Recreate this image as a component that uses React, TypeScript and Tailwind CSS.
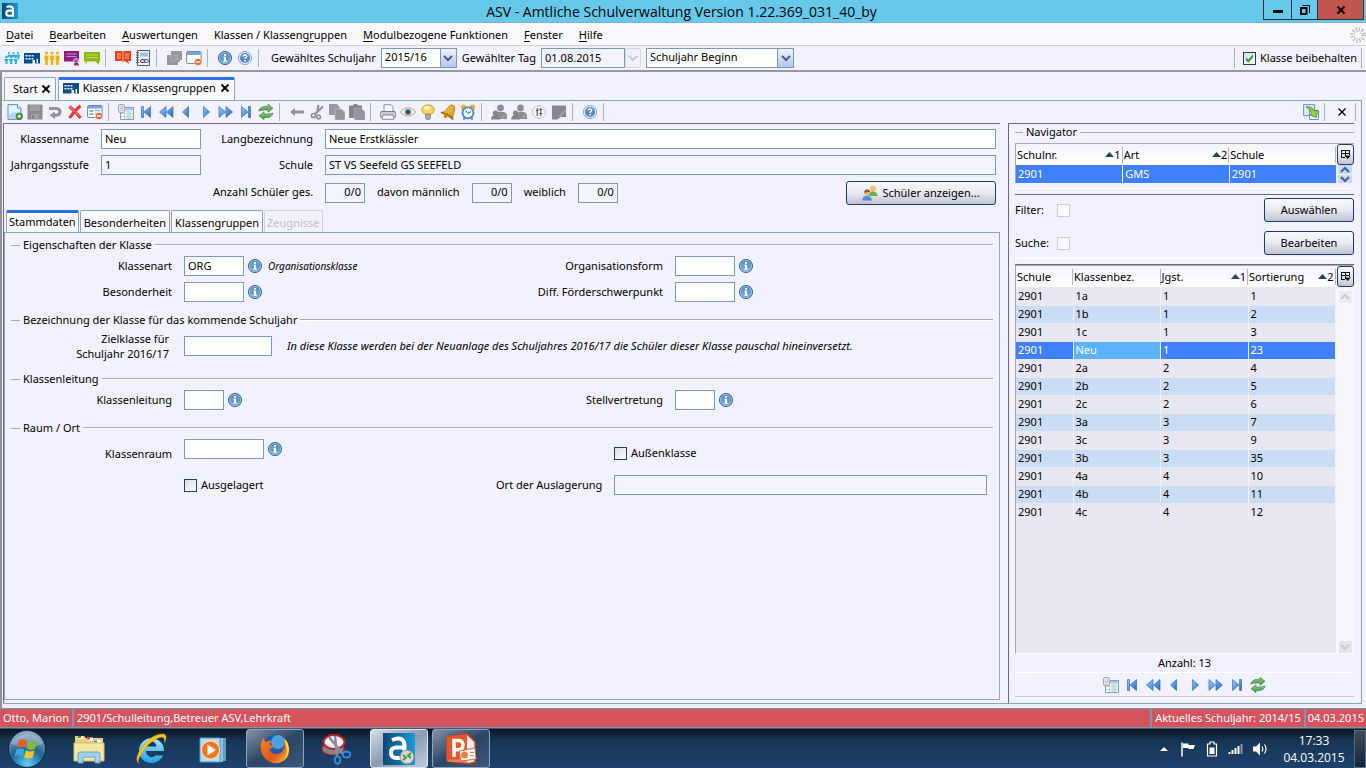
import type { ReactNode } from 'react';

/* ---------- icons ---------- */

type IconProps = { children: ReactNode; size?: string };

function Svg({ children, size = 'size-4' }: IconProps) {
  return (
    <svg viewBox="0 0 16 16" className={`${size} block shrink-0`} aria-hidden="true">
      {children}
    </svg>
  );
}

function Gradients() {
  return (
    <svg className="absolute size-0" aria-hidden="true">
      <defs>
        <linearGradient id="blueArrow" x1="0" y1="0" x2="1" y2="1">
          <stop offset="0" stopColor="#a5cdf5" />
          <stop offset="1" stopColor="#1f62c4" />
        </linearGradient>
        <linearGradient id="infoFill" x1="0" y1="0" x2="0" y2="1">
          <stop offset="0" stopColor="#4f86bd" />
          <stop offset="1" stopColor="#7fb0da" />
        </linearGradient>
        <linearGradient id="gold" x1="0" y1="0" x2="1" y2="1">
          <stop offset="0" stopColor="#ffe36a" />
          <stop offset="1" stopColor="#c98208" />
        </linearGradient>
        <linearGradient id="green" x1="0" y1="0" x2="0" y2="1">
          <stop offset="0" stopColor="#8fd18a" />
          <stop offset="1" stopColor="#3f9440" />
        </linearGradient>
        <radialGradient id="orb" cx="0.5" cy="0.9" r="0.9">
          <stop offset="0" stopColor="#5fd0f5" />
          <stop offset="0.5" stopColor="#1f6292" />
          <stop offset="1" stopColor="#9db4c4" />
        </radialGradient>
        <linearGradient id="asv" x1="0" y1="0" x2="1" y2="0">
          <stop offset="0" stopColor="#0c4576" />
          <stop offset="1" stopColor="#1c9ad6" />
        </linearGradient>
        <linearGradient id="fox" x1="0" y1="0" x2="1" y2="1">
          <stop offset="0" stopColor="#f08a1c" />
          <stop offset="0.6" stopColor="#e2551a" />
          <stop offset="1" stopColor="#fdd33a" />
        </linearGradient>
        <linearGradient id="ie" x1="0" y1="0" x2="0" y2="1">
          <stop offset="0" stopColor="#a5e6fb" />
          <stop offset="1" stopColor="#1f9fe0" />
        </linearGradient>
      </defs>
    </svg>
  );
}

const AsvLogo = () => (
  <Svg>
    <rect width="16" height="16" fill="url(#asv)" />
    <path d="M4.600 4.200Q7.500 2.600 10 4Q11 4.800 11 6.500V12.800H6.800Q4.200 12.600 4.200 10.200Q4.300 7.700 7 7.600H10.600" fill="none" stroke="#fff" strokeWidth="2.100" />
  </Svg>
);

const People = () => (
  <Svg>
    <g fill="#25b1dc">
      <circle cx="5" cy="3" r="1.100" /><circle cx="9.500" cy="3" r="1.100" /><circle cx="14" cy="3" r="1.100" />
      <path d="M3.500 4.800h12.500v1L14.800 9h-1L13 6.500l-1.500 1L10 6.500 8.500 7.500 7 6.500 4 7z" />
      <circle cx="2.500" cy="7" r="1.300" /><circle cx="7" cy="7" r="1.300" /><circle cx="11.500" cy="7" r="1.300" />
      <path d="M0 9h4.500l-1 2.500V14h-2v-2.500zM4.700 9h4.500l-1 2.500V14h-2v-2.500zM9.400 9h4.500l-1 2.500V14h-2v-2.500z" />
    </g>
  </Svg>
);

const School = () => (
  <Svg>
    <path d="M0 3h16v10.500h-5V10H8.500v3.500H0z" fill="#0a4c8c" />
    <path d="M1.500 5h2v1.500h-2zM4.500 5h2v1.500h-2zM7.500 5h2v1.500h-2zM1.500 8h2v1.500h-2zM4.500 8h2v1.500h-2zM7.500 8h2v1.500h-2zM12.500 9h1.500v4.500h-1.500z" fill="#f4f7ff" />
  </Svg>
);

const YellowPeople = () => (
  <Svg>
    <g fill="#f6b100">
      <circle cx="2.500" cy="3" r="1.600" /><circle cx="8" cy="3" r="1.600" /><circle cx="13.500" cy="3" r="1.600" />
      <path d="M.5 5.500h4V10h-.7v5H1.200v-5H.5zM6 5.500h4V10h-.7v5H6.700v-5H6zM11.500 5.500h4V10h-.7v5h-2.600v-5h-.7z" />
    </g>
  </Svg>
);

const Certificate = () => (
  <Svg>
    <path d="M0 1h15v10.500H0z" fill="#8b1c83" />
    <path d="M2.500 4h10M2.500 6.500h10" stroke="#c98cc6" strokeWidth="1" />
    <circle cx="12" cy="11" r="2.500" fill="#a94ba2" stroke="#f3e4f6" strokeWidth=".8" />
    <path d="M10.500 13l-.5 3 2-1 3 1-1-3" fill="#8b1c83" />
  </Svg>
);

const Speech = () => (
  <Svg>
    <path d="M0 2h16v9.500h-1v3.500l-3.500-3.500H3L2 15l-.5-3.500H0z" fill="#8fb80c" />
    <path d="M2.500 5h11M2.500 7.500h11" stroke="#c6dc7c" />
  </Svg>
);

const OrangeBook = () => (
  <Svg>
    <path d="M0 1h7l1 1 1-1h7v10h-3l1.500 3-5-3L8 12l-1-1H0z" fill="#e5451b" />
    <path d="M2 4h4M2 6h4M2 8h4M10 4h4M10 6h4M10 8h4M8 2v9" stroke="#f9b9a4" strokeWidth=".9" />
  </Svg>
);

const Notebook = () => (
  <Svg>
    <path d="M2.500.5h12v15h-12z" fill="#eef2f8" stroke="#4b5a70" />
    <path d="M5 2.500h8v4H5z" fill="#9cc1ea" />
    <path d="M1 2.500h3M1 5h3M1 7.500h3M1 10h3M1 12.500h3" stroke="#555" strokeWidth=".9" />
    <rect x="5.500" y="9.500" width="4.500" height="3" rx="1.500" fill="none" stroke="#333" />
    <rect x="9" y="9.500" width="4.500" height="3" rx="1.500" fill="none" stroke="#555" />
  </Svg>
);

const GrayPages = () => (
  <Svg>
    <path d="M5 1h11v9h-2v2h-2v3H1V5h4z" fill="#98989c" />
    <path d="M5 5v6q3 1 5-2l1.500 1V5.500L8 6" fill="none" stroke="#adadb3" strokeWidth="1.200" />
  </Svg>
);

const WindowMinus = () => (
  <Svg>
    <rect x=".6" y="1.500" width="14.500" height="12" rx="1" fill="#fff" stroke="#5e8ac4" />
    <path d="M1 2h13.700v3H1z" fill="#75a5dc" />
    <circle cx="12" cy="12" r="3.600" fill="#e2672a" stroke="#fff" strokeWidth=".5" />
    <path d="M10 12h4" stroke="#fff" strokeWidth="1.400" />
  </Svg>
);

const FormMinus = () => (
  <Svg>
    <rect x=".6" y="1.500" width="14.500" height="12" rx="1" fill="#fff" stroke="#5e8ac4" />
    <path d="M1 2h13.700v2.500H1z" fill="#75a5dc" />
    <path d="M2.500 7h4M2.500 10h4" stroke="#555" />
    <path d="M8 6.500h5M8 9.500h3" stroke="#7fb0e6" strokeWidth="1.500" />
    <circle cx="12" cy="12" r="3.600" fill="#e2672a" stroke="#fff" strokeWidth=".5" />
    <path d="M10 12h4" stroke="#fff" strokeWidth="1.400" />
  </Svg>
);

const Info = () => (
  <Svg>
    <circle cx="8" cy="8" r="6.600" fill="url(#infoFill)" stroke="#3a6aa3" strokeWidth="1" />
    <circle cx="8" cy="8" r="5.600" fill="none" stroke="#a3c3e2" strokeWidth=".8" />
    <path d="M7 4h2v1.700H7zM6.300 6.700H9v4h.9v1.100H6.200v-1.100H7V7.800h-.7z" fill="#fff" />
  </Svg>
);

const Help = () => (
  <Svg>
    <circle cx="8" cy="8" r="6.600" fill="#dfeaf7" stroke="#88aad0" />
    <circle cx="8" cy="8" r="5" fill="#5488c8" />
    <path d="M6.200 6.500Q6.300 5 8 5t1.800 1.500Q9.700 7.500 8 8.300v.8" fill="none" stroke="#fff" strokeWidth="1.400" />
    <path d="M7.200 10h1.600v1.400H7.200z" fill="#fff" />
  </Svg>
);

const NewDoc = () => (
  <Svg>
    <path d="M1 .6h9.500L14 4v11.400H1z" fill="#e4f0fc" stroke="#4f8fd0" />
    <path d="M10.500.6V4H14" fill="#fff" stroke="#4f8fd0" />
    <path d="M2 11.500q4-4 10-3v6.500H2z" fill="#b5d6f5" />
    <circle cx="12.300" cy="12.300" r="3.300" fill="#4a9a2c" stroke="#2f7220" strokeWidth=".6" />
    <path d="M10.500 12.300h3.600M12.300 10.500v3.600" stroke="#fff" strokeWidth="1.300" />
  </Svg>
);

const Save = () => (
  <Svg>
    <path d="M.5.500h14l1 1v14H.5z" fill="#8b8b8f" />
    <path d="M3 1h10v6H3z" fill="#9c9ca1" /><path d="M4 10h8v5H4z" fill="#9f9fa4" /><path d="M5 11h2v4H5z" fill="#7d7d82" />
  </Svg>
);

const Undo = () => (
  <Svg>
    <path d="M2 4.500h7.500q3.500.3 3.500 3.300t-3.500 3.400H6" fill="none" stroke="#929298" strokeWidth="3" />
    <path d="M8 7.500v7.500L2.500 11.200z" fill="#929298" />
  </Svg>
);

const Delete = () => (
  <Svg>
    <path d="M2.500 2.500Q8 7 13.500 14M13.500 1.800Q7 7 2.500 14" stroke="#e73a37" strokeWidth="3.200" fill="none" />
    <path d="M3 3q4 3 9 9" stroke="#ff8d84" fill="none" />
  </Svg>
);

const TableView = () => (
  <Svg>
    <path d="M2.500 3.500h13v12h-13z" fill="#f8fbfe" stroke="#7ba0cc" />
    <path d="M3 4h12v2.500H3z" fill="#a5cbef" />
    <path d="M6.500 6v9M3 9.500h12M3 12.500h12" stroke="#b7cde4" strokeWidth=".8" />
    <path d="M8.500 8h5M8.500 11h5M8.500 14h5" stroke="#8cc98a" strokeWidth=".9" />
    <rect x=".5" y=".5" width="6" height="8" rx="1.500" fill="#e7e7ea" stroke="#a5a5ac" />
    <rect x="2" y="2" width="3" height="5" fill="#d2d2d8" />
  </Svg>
);

const First = () => (
  <Svg>
    <path d="M3.500 2.500h2v11h-2zM12.500 2.500v11L6 8z" fill="url(#blueArrow)" stroke="#2f6fc8" strokeWidth=".7" />
  </Svg>
);
const FastBack = () => (
  <Svg>
    <path d="M8 2.500v11L1.500 8zM15 2.500v11L8.500 8z" fill="url(#blueArrow)" stroke="#2f6fc8" strokeWidth=".7" />
  </Svg>
);
const Back = () => (
  <Svg>
    <path d="M10.500 2.500v11L4.500 8z" fill="url(#blueArrow)" stroke="#2f6fc8" strokeWidth=".7" />
  </Svg>
);
const Forward = () => (
  <Svg>
    <path d="M5.500 2.500v11l6-5.500z" fill="url(#blueArrow)" stroke="#2f6fc8" strokeWidth=".7" />
  </Svg>
);
const FastForward = () => (
  <Svg>
    <path d="M1 2.500v11L7.500 8zM8 2.500v11L14.500 8z" fill="url(#blueArrow)" stroke="#2f6fc8" strokeWidth=".7" />
  </Svg>
);
const Last = () => (
  <Svg>
    <path d="M3.500 2.500v11L10 8zM10.500 2.500h2v11h-2z" fill="url(#blueArrow)" stroke="#2f6fc8" strokeWidth=".7" />
  </Svg>
);

const Refresh = () => (
  <Svg>
    <path d="M.8 7Q2 2.500 7.500 2.300H10V.3l5 4-5 3.900V6H7Q4 6 .8 7z" fill="url(#green)" stroke="#347d38" strokeWidth=".6" />
    <path d="M15.200 9Q14 13.500 8.500 13.700H6v2l-5-4 5-3.900V10h3q3 0 6.200-1z" fill="url(#green)" stroke="#347d38" strokeWidth=".6" />
  </Svg>
);

const GrayBack = () => (
  <Svg>
    <path d="M1 8l5-4v2.500h9v3H6V12z" fill="#929296" />
  </Svg>
);

const Scissors = () => (
  <Svg>
    <path d="M9.500 1L8 9M14 2.500L6 10" stroke="#929296" strokeWidth="2.200" />
    <circle cx="4.500" cy="11.500" r="2" fill="none" stroke="#929296" strokeWidth="1.700" />
    <circle cx="9.500" cy="13" r="1.900" fill="none" stroke="#929296" strokeWidth="1.700" />
  </Svg>
);

const Copy = () => (
  <Svg>
    <path d="M0 0h8l2.500 3v8H0z" fill="#9a9a9e" />
    <path d="M6 5h6.500L16 8.500V16H6z" fill="#96969a" stroke="#c0c0c6" strokeWidth=".7" />
  </Svg>
);

const Paste = () => (
  <Svg>
    <path d="M0 1.500h4L5 0h3l1 1.500h4V14H0z" fill="#85858a" />
    <path d="M5.500 4.500h7L16 8v8H5.500z" fill="#94949a" stroke="#b0b0b6" strokeWidth=".7" />
  </Svg>
);

const Print = () => (
  <Svg>
    <path d="M4 .7h7l2 2V8H4z" fill="#f5faff" stroke="#6f9ccc" />
    <path d="M1 7.500h14l.7 2V13H.3V9.500z" fill="#c9ccd3" stroke="#6d7480" strokeWidth=".9" />
    <path d="M3 11h10l1 4.300H2z" fill="#f7f9fc" stroke="#7c8492" strokeWidth=".9" />
  </Svg>
);

const Eye = () => (
  <Svg>
    <path d="M.5 8Q8-1 15.500 8 8 16.500.5 8z" fill="#fbf4ee" stroke="#d3a178" strokeWidth="1.100" />
    <circle cx="8" cy="8" r="3.200" fill="#5e8fd0" /><circle cx="8" cy="8" r="1.400" fill="#16233c" />
  </Svg>
);

const Bulb = () => (
  <Svg>
    <path d="M8 .8a6 5 0 0 1 3.500 9.200H4.500A6 5 0 0 1 8 .8z" fill="#ffd659" stroke="#e29a2c" />
    <ellipse cx="7" cy="4" rx="3" ry="2" fill="#fff4c8" />
    <path d="M5.500 10.500h5v3.500l-1 1.500h-3l-1-1.500z" fill="#a7a9b0" stroke="#70737c" strokeWidth=".6" />
  </Svg>
);

const Bell = () => (
  <Svg>
    <path d="M11.500.8q3 0 3.200 3-.2 4-1.200 6t-.5 5.500L1 8.500Q5 8.500 7 5T11.500.8z" fill="url(#gold)" stroke="#b87808" strokeWidth=".8" />
    <path d="M.8 8.500Q8 9 13 15.500" stroke="#a86c0a" strokeWidth="1.600" fill="none" />
    <circle cx="5.500" cy="12.500" r="1.800" fill="#c98912" />
  </Svg>
);

const Clock = () => (
  <Svg>
    <circle cx="3.500" cy="3.200" r="2.700" fill="#f0b030" /><circle cx="12.500" cy="3.200" r="2.700" fill="#f0b030" />
    <path d="M3.500 15.500l2-3M12.500 15.500l-2-3" stroke="#4f86bd" strokeWidth="2" />
    <circle cx="8" cy="8.800" r="5.500" fill="#f6fbff" stroke="#4f8dcb" strokeWidth="2" />
    <path d="M6 7l2 2.500L11 7.500" stroke="#33557c" fill="none" />
  </Svg>
);

const GrayPeople = () => (
  <Svg>
    <circle cx="9.500" cy="4" r="3.400" fill="#8d8d92" />
    <path d="M5 8h8q3 1 3 4v3H5z" fill="#8d8d92" />
    <circle cx="4.500" cy="9" r="2.600" fill="#828287" />
    <path d="M0 15.500Q.5 11 4.500 11t4.500 4.500z" fill="#828287" />
    <circle cx="12.800" cy="12.500" r="1.800" fill="#9b9ba1" />
  </Svg>
);

const Filters = () => (
  <Svg>
    <circle cx="8" cy="8" r="6.500" fill="#f8f8fa" stroke="#c0c0c5" />
    <path d="M6.200 4v8M9.800 4v8M4.700 6.500h3M8.300 9.500h3M8.300 5.500h3" stroke="#555" strokeWidth="1.100" />
  </Svg>
);

const GrayNote = () => (
  <Svg>
    <path d="M1 1.500h14v11.500H9.500l-3 2.500H1z" fill="#87878c" /><path d="M8 11.500l6-6 1.500 1.500-6 6z" fill="#a0a0a6" />
  </Svg>
);

const Export = () => (
  <Svg>
    <path d="M.6.600h11v11H.6z" fill="#d9eafa" stroke="#5d96ce" />
    <path d="M6.500 6.500h9v9h-9z" fill="#edf5fd" stroke="#5d96ce" />
    <path d="M3 3q6-1 8.500 4l3-1-1 7.500L6.500 11l2.200-1.700Q7.500 5 3 3z" fill="#9bcf2f" stroke="#3f8a24" strokeWidth=".8" />
  </Svg>
);

const StudentPair = () => (
  <Svg>
    <circle cx="11" cy="3.500" r="3" fill="#f0c06a" /><path d="M6.500 11Q7 6.500 11 6.500t4.500 4.500z" fill="#69b04c" />
    <circle cx="5" cy="8" r="2.800" fill="#e9b08a" /><path d="M2 7.500Q2.500 4 5.500 4.500T8 7z" fill="#9a4d26" />
    <path d="M0 15.500Q.5 10.700 5 10.700t5 4.800z" fill="#4d8fe0" />
  </Svg>
);

const Spinner = () => (
  <Svg>
    <circle cx="8" cy="8" r="5.500" fill="none" stroke="#b9b9be" strokeWidth="4.500" strokeDasharray="1.200 1.680" />
  </Svg>
);

const ColumnPicker = () => (
  <svg viewBox="0 0 11 11" className="block size-[11px] shrink-0" aria-hidden="true">
    <path d="M1.500 1v8M1 1.500h9M9.500 1v5M5.500 1v7M1 4.500h9M1 8.500h4" fill="none" stroke="#111" />
    <path d="M4.500 6.500h6.500L7.700 10z" fill="#111" />
  </svg>
);

function CloseX({ thin = false }: { thin?: boolean }) {
  return (
    <svg viewBox="0 0 10 10" className="block size-2.5 shrink-0" aria-hidden="true">
      <path d="M1.500 1.500l7 7M8.500 1.500l-7 7" stroke="#000" strokeWidth={thin ? 1.4 : 1.9} />
    </svg>
  );
}

function Chevron({ up = false, faint = false }: { up?: boolean; faint?: boolean }) {
  return (
    <svg viewBox="0 0 10 7" className="block h-2 w-2.5" aria-hidden="true">
      <path d={up ? 'M1 5.500l4-4 4 4' : 'M1 1.500l4 4 4-4'} fill="none" stroke={faint ? '#c8c8ce' : '#44608c'} strokeWidth="2" />
    </svg>
  );
}

/* ---------- taskbar pictures ---------- */

const StartOrb = () => (
  <svg viewBox="0 0 40 40" className="block size-10" aria-hidden="true">
    <circle cx="20" cy="20" r="18.500" fill="url(#orb)" stroke="#0b2a44" />
    <path d="M4 15a17 15 0 0 1 32 0q-16 7-32 0z" fill="#fff" opacity=".25" />
    <path d="M12 11.500q4-2.500 8 .3l-2 7.200q-4-2.500-8 0z" fill="#ee5a24" />
    <path d="M21.500 12.300q4 2.600 8.500.2l-2 7.300q-4 2.400-8.500-.2z" fill="#86bc2c" />
    <path d="M9.500 20.500q4-2.500 8 .2l-2 7q-4-2.700-8-.2z" fill="#3fa3e8" />
    <path d="M19 21.200q4 2.600 8.500.2l-2 7q-4 2.500-8.500-.2z" fill="#fbc625" />
  </svg>
);

const Explorer = () => (
  <svg viewBox="0 0 32 32" className="block size-8" aria-hidden="true">
    <path d="M2 3h9l2 2h17v20H2z" fill="#e9cf7c" />
    <path d="M5 4.500h5M14 6h6M21 8.500h7" stroke="#fff" strokeWidth="3" />
    <path d="M5 4h3" stroke="#2ca02c" strokeWidth="2" /><path d="M14 5.500h3" stroke="#d62728" strokeWidth="2" /><path d="M21 8.500h3" stroke="#2f7fd0" strokeWidth="2" />
    <path d="M1 10h30v18H1z" fill="#f7e7a6" stroke="#d8bb62" />
    <path d="M5 30v-9q0-2 2-2h18q2 0 2 2v9h-5v-6H10v6z" fill="#9fd3ea" stroke="#5fa6c8" />
  </svg>
);

const InternetExplorer = () => (
  <svg viewBox="0 0 32 32" className="block size-8" aria-hidden="true">
    <path d="M29 18A12.500 12.500 0 1 0 28 22.500h-7.500Q16 26.500 12 21.500 11 20 11 18zM11 13.500q1.500-5 5.500-5t5 5z" fill="url(#ie)" fillRule="evenodd" />
    <path d="M4 30.500Q-2 26 8 13T29 1q4 1.500.5 8.500.5-5.500-3-5.500Q17 6 9 17T4 30.500z" fill="#f5c524" stroke="#c99a12" strokeWidth=".5" />
  </svg>
);

const MediaPlayer = () => (
  <svg viewBox="0 0 32 32" className="block size-8" aria-hidden="true">
    <path d="M12 5h17v23H12z" fill="#5f9dc0" /><path d="M9 5h17v24H9z" fill="#8cc3df" /><path d="M3 5h20v24H3z" fill="#b6dcef" stroke="#5d98bb" />
    <circle cx="13.500" cy="17" r="9" fill="#f0771c" stroke="#fff3e2" strokeWidth=".8" />
    <path d="M10.500 11.500v11l8.500-5.500z" fill="#fff" />
  </svg>
);

const Firefox = () => (
  <svg viewBox="0 0 32 32" className="block size-8" aria-hidden="true">
    <circle cx="17" cy="14" r="12.500" fill="#2458a8" /><circle cx="19" cy="9" r="7" fill="#4aa0e0" />
    <path d="M2 10q1-4 3-5 0 3 2 4 3-2 6-1-3 2-2 4l4 1q-1 3-5 3 2 5 7 5 7 0 8-7 1-5-2-9 6 4 7 10 1 8-5 12.500T11 29Q0 24 2 10z" fill="url(#fox)" />
    <path d="M25 5q5 5 5 11t-5 11q4-7 2-13z" fill="#fcd84a" />
  </svg>
);

const Snipping = () => (
  <svg viewBox="0 0 32 32" className="block size-8" aria-hidden="true">
    <ellipse cx="12" cy="16" rx="11" ry="6" fill="#85858c" stroke="#c0222c" strokeWidth="1.200" />
    <ellipse cx="13" cy="9" rx="10.500" ry="7" fill="#f2f2f4" stroke="#c0222c" strokeWidth="2" />
    <path d="M8 4l14 17M14 3l2 20" stroke="#888d95" strokeWidth="2.500" />
    <ellipse cx="16.500" cy="27" rx="2.800" ry="3.800" fill="none" stroke="#2f8fd8" strokeWidth="2" />
    <ellipse cx="25.500" cy="21.500" rx="3.800" ry="3" fill="none" stroke="#2f8fd8" strokeWidth="2" />
  </svg>
);

const AsvLarge = () => (
  <svg viewBox="0 0 32 32" className="block size-8" aria-hidden="true">
    <rect width="32" height="32" fill="url(#asv)" />
    <path d="M9 7Q15 4.500 19 6.500q2.500 2 2.500 6V25H13q-5-.5-5-5.500 0-4.500 5-5h8" fill="none" stroke="#fff" strokeWidth="4" />
    <circle cx="24" cy="24" r="7" fill="#d7d9d6" stroke="#888" />
    <path d="M20 22l3 2.500-3 2.500M28 20l-3 2.500 3 2.500" fill="none" stroke="#3c9a34" strokeWidth="1.800" />
  </svg>
);

const PowerPoint = () => (
  <svg viewBox="0 0 32 32" className="block size-8" aria-hidden="true">
    <path d="M2 4L22 1l8 8v20l-6 1.500L2 28z" fill="#f3ece8" stroke="#d8431a" strokeWidth="1.500" />
    <path d="M2 4L22 1v28L2 28z" fill="#e4572a" />
    <path d="M4 26.500h18V30L3 28.500z" fill="#f0805a" />
    <path d="M9 24V7.500h4.500q4.500.3 4.500 4.500t-4.500 4.800H9" fill="none" stroke="#fff" strokeWidth="3.500" />
    <path d="M14 18l16-3 1 11-15 2z" fill="#fff" stroke="#e0683c" /><circle cx="19.500" cy="22" r="3.500" fill="#ec7a4a" /><path d="M25 19.500h4M25 22.500h4" stroke="#e77a50" />
  </svg>
);

/* ---------- form parts ---------- */

const fieldEdge = 'h-5 border border-[#7b99bd] px-[3px] pb-0.5 text-[11px] leading-4 outline-none';

function Field({ id, value = '', width, locked = false, right = false, label }: { id: string; value?: string; width: string; locked?: boolean; right?: boolean; label?: string }) {
  return (
    <input
      id={id}
      type="text"
      aria-label={label}
      defaultValue={value}
      readOnly={locked}
      className={`${fieldEdge} ${width} ${locked ? 'bg-[#f2f3fe]' : 'bg-white'} ${right ? 'text-right' : ''}`}
    />
  );
}

function Label({ htmlFor, width = '', children }: { htmlFor: string; width?: string; children: ReactNode }) {
  return (
    <label htmlFor={htmlFor} className={`${width} shrink-0 pb-0.5 text-right leading-[15px] whitespace-nowrap`}>
      {children}
    </label>
  );
}

function InfoButton({ label }: { label: string }) {
  return (
    <button type="button" aria-label={label} className="-ml-[9px] shrink-0">
      <Info />
    </button>
  );
}

function Check({ id, checked = false, disabled = false }: { id: string; checked?: boolean; disabled?: boolean }) {
  return (
    <span className="relative block size-[13px] shrink-0">
      <input
        id={id}
        type="checkbox"
        defaultChecked={checked}
        disabled={disabled}
        className="block size-[13px] appearance-none border border-[#1c4073] bg-linear-to-br from-[#dddde0] to-white disabled:border-[#cdcdd2] disabled:from-[#f4f4f6]"
      />
      {checked && (
        <svg viewBox="0 0 13 13" className="pointer-events-none absolute inset-0 size-[13px]" aria-hidden="true">
          <path d="M3 5.500v3l2.300 2L10 5.500v-3L5.300 7.500z" fill="#21a121" />
        </svg>
      )}
    </span>
  );
}

const Divider = () => <span className="mr-[5px] ml-px h-[18px] w-px shrink-0 bg-[#b0b0b8]" />;

function ToolGroup({ items }: { items: [string, ReactNode][] }) {
  return (
    <>
      {items.map(([name, icon]) => (
        <button key={name} type="button" aria-label={name} className="shrink-0">
          {icon}
        </button>
      ))}
      <Divider />
    </>
  );
}

function Group({ title, children }: { title: string; children: ReactNode }) {
  return (
    <section>
      <h2 className="flex h-4 items-center gap-[3px] px-1.5 leading-4">
        <span className="h-px w-[9px] bg-[#a9a9b2]" />
        {title}
        <span className="box-content h-px flex-1 border-b border-white bg-[#a9a9b2]" />
      </h2>
      {children}
    </section>
  );
}

const buttonLook =
  'flex items-center justify-center gap-1 rounded-[3px] border border-[#173c70] bg-linear-to-b from-[#f8f8fd] via-[#e9e9f2] to-[#c3c3d0]';

/* ---------- navigator tables ---------- */

function Head({ title, sort }: { title: string; sort?: number }) {
  return (
    <th className="h-[21px] p-0 text-left font-normal">
      <span className="flex h-4 items-center border-r border-[#b5b5be] px-px">
        <span className="flex-1">{title}</span>
        {sort && (
          <>
            <svg viewBox="0 0 9 5" className="block h-[5px] w-[9px]" aria-hidden="true">
              <path d="M4.500 0L9 5H0z" fill="#27445c" />
            </svg>
            <span>{sort}</span>
          </>
        )}
      </span>
    </th>
  );
}

const ColumnButton = () => (
  <button type="button" aria-label="Spalten wählen" className={`${buttonLook} h-[21px] w-[17px] shrink-0`}>
    <ColumnPicker />
  </button>
);

const classes: [string, string, string, string][] = [
  ['2901', '1a', '1', '1'],
  ['2901', '1b', '1', '2'],
  ['2901', '1c', '1', '3'],
  ['2901', 'Neu', '1', '23'],
  ['2901', '2a', '2', '4'],
  ['2901', '2b', '2', '5'],
  ['2901', '2c', '2', '6'],
  ['2901', '3a', '3', '7'],
  ['2901', '3c', '3', '9'],
  ['2901', '3b', '3', '35'],
  ['2901', '4a', '4', '10'],
  ['2901', '4b', '4', '11'],
  ['2901', '4c', '4', '12'],
];

function rowLook(name: string, index: number) {
  if (name === 'Neu') return 'bg-[#3f80ff] text-white';
  return index % 2 ? 'bg-[#cbdcf5]' : 'bg-[#e8e7f1]';
}

const cellLook = 'border-r border-b border-r-[#f2f2fb] border-b-[#e8e7f1] px-0.5 py-0';

function Navigator() {
  return (
    <aside className="flex w-[346px] shrink-0 flex-col border-t border-l border-[#6b6b76] pl-1.5">
      <h2 className="flex h-4 items-center gap-[3px] leading-4">
        <span className="h-px w-2 bg-[#a9a9b2]" />
        Navigator
        <span className="h-px flex-1 bg-[#a9a9b2]" />
      </h2>
      <div className="mt-[3px] flex border-t border-l border-[#a9a9b2]">
        <div className="flex-1">
          <table className="w-full table-fixed border-collapse">
            <thead>
              <tr className="bg-linear-to-b from-[#f3f3fd] to-white">
                <Head title="Schulnr." sort={1} />
                <Head title="Art" sort={2} />
                <Head title="Schule" />
              </tr>
            </thead>
            <tbody>
              <tr className="h-[18px] bg-[#3f80ff] text-white">
                <td className="border-r border-white px-0.5 py-0">2901</td>
                <td className="border-r border-white px-0.5 py-0">GMS</td>
                <td className="px-0.5 py-0">2901</td>
              </tr>
            </tbody>
          </table>
        </div>
        <div className="flex w-[18px] flex-col items-center">
          <ColumnButton />
          <button type="button" aria-label="Nach oben" className="flex h-[9px] w-[14px] items-center justify-center bg-[#c9d9f3]">
            <Chevron up />
          </button>
          <button type="button" aria-label="Nach unten" className="mt-px flex h-2 w-[14px] items-center justify-center bg-[#c9d9f3]">
            <Chevron />
          </button>
        </div>
      </div>
      <div className="mt-[5px] h-[7px] border-t border-b border-t-white border-b-[#6b6b76]" />
      <div className="mt-[3px] flex h-6 items-center">
        <label htmlFor="filter" className="w-[42px]">Filter:</label>
        <Check id="filter" disabled />
        <button type="button" className={`${buttonLook} ml-auto h-6 w-[90px]`}>Auswählen</button>
      </div>
      <div className="mt-[9px] flex h-6 items-center">
        <label htmlFor="suche" className="w-[42px]">Suche:</label>
        <Check id="suche" disabled />
        <button type="button" className={`${buttonLook} ml-auto h-6 w-[90px]`}>Bearbeiten</button>
      </div>
      <div className="mt-[3px] h-[7px] border-t border-b border-t-white border-b-[#6b6b76]" />
      <div className="flex min-h-0 flex-1 border border-r-0 border-[#a9a9b2] border-b-white bg-[#e8e7f1]">
        <div className="flex-1">
          <table className="w-full table-fixed border-collapse">
            <colgroup>
              <col className="w-[57px]" />
              <col />
              <col />
              <col />
            </colgroup>
            <thead>
              <tr className="bg-linear-to-b from-[#f3f3fd] to-white">
                <Head title="Schule" />
                <Head title="Klassenbez." />
                <Head title="Jgst." sort={1} />
                <Head title="Sortierung" sort={2} />
              </tr>
            </thead>
            <tbody>
              {classes.map(([school, name, grade, order], i) => (
                <tr key={name} className={`h-[18px] ${rowLook(name, i)}`}>
                  <td className={cellLook}>{school}</td>
                  <td className={`${cellLook} ${name === 'Neu' ? 'bg-[#5cb2ff]' : ''}`}>{name}</td>
                  <td className={cellLook}>{grade}</td>
                  <td className={cellLook}>{order}</td>
                </tr>
              ))}
            </tbody>
          </table>
        </div>
        <div className="flex w-[18px] flex-col items-center bg-[#f7f7fd]">
          <ColumnButton />
          <span className="mt-1 flex h-3 w-[13px] items-center justify-center bg-[#ebebf2]"><Chevron up faint /></span>
          <span className="mt-auto flex h-3 w-[13px] items-center justify-center bg-[#e4e4ea]"><Chevron faint /></span>
        </div>
      </div>
      <p className="h-[19px] border-b border-white text-center leading-[18px]">Anzahl: 13</p>
      <div className="mb-1.5 flex h-6 items-center justify-center gap-[5px] border-b border-[#c8c8d4]">
        {([
          ['Tabelle', <TableView />],
          ['Erster', <First />],
          ['Seite zurück', <FastBack />],
          ['Zurück', <Back />],
          ['Weiter', <Forward />],
          ['Seite weiter', <FastForward />],
          ['Letzter', <Last />],
          ['Aktualisieren', <Refresh />],
        ] as [string, ReactNode][]).map(([name, icon]) => (
          <button key={name} type="button" aria-label={name}>{icon}</button>
        ))}
      </div>
    </aside>
  );
}

/* ---------- window parts ---------- */

function TitleBar() {
  return (
    <header className="flex h-[23px] shrink-0 border-b border-[#7fb1cf] bg-[#66c9ea]">
      <div className="flex w-[100px] items-center pl-0.5"><AsvLogo /></div>
      <h1 className="flex-1 text-center font-['Open_Sans',sans-serif] text-[14px] leading-6">ASV - Amtliche Schulverwaltung Version 1.22.369_031_40_by</h1>
      <div className="flex h-5 w-[103px] shrink-0">
        <button type="button" aria-label="Minimieren" className="flex w-7 items-end justify-center border-b border-l border-[#24343c] pb-1.5">
          <span className="h-[3px] w-2.5 bg-black" />
        </button>
        <button type="button" aria-label="Verkleinern" className="flex w-[26px] items-center justify-center border-b border-l border-[#24343c]">
          <svg viewBox="0 0 10 10" className="size-2.5" aria-hidden="true">
            <path d="M1 3h5.500v6H1z" fill="none" stroke="#000" strokeWidth="2" /><path d="M2.500.5h7V8" fill="none" stroke="#000" />
          </svg>
        </button>
        <button type="button" aria-label="Schließen" className="flex w-[47px] items-center justify-center border-x border-b border-[#24343c] bg-[#c2564e]">
          <CloseX />
        </button>
      </div>
    </header>
  );
}

const menus: [string, string, string][] = [
  ['', 'D', 'atei'],
  ['', 'B', 'earbeiten'],
  ['', 'A', 'uswertungen'],
  ['Klassen / Klasseng', 'r', 'uppen'],
  ['', 'M', 'odulbezogene Funktionen'],
  ['', 'F', 'enster'],
  ['', 'H', 'ilfe'],
];

function MenuBar() {
  return (
    <nav className="flex h-[23px] shrink-0 items-center gap-4 border-b border-[#d3d3de] bg-[#f8f8fd] pt-0.5 pl-1.5">
      {menus.map(([before, key, after]) => (
        <button key={before + key + after} type="button">
          {before}<u className="underline-offset-2">{key}</u>{after}
        </button>
      ))}
      <span className="ml-auto"><Spinner /></span>
    </nav>
  );
}

function DropDown({ id, value, width }: { id: string; value: string; width: string }) {
  return (
    <span className="relative block shrink-0">
      <select id={id} aria-label={value} className={`${fieldEdge} ${width} block appearance-none bg-white`}>
        <option>{value}</option>
      </select>
      <span className="pointer-events-none absolute top-0 right-0 flex h-5 w-[17px] items-center justify-center rounded-[2px] border border-[#7b99bd] bg-linear-to-b from-[#eef4fd] to-[#b3c7ea]">
        <Chevron />
      </span>
    </span>
  );
}

function MainToolbar() {
  return (
    <div className="flex h-[26px] shrink-0 items-center gap-1 border-b-2 border-[#96969e] bg-[#f2f2fe] pl-1">
      <ToolGroup items={[['Schüler', <People />], ['Schule', <School />], ['Lehrer', <YellowPeople />], ['Zeugnisse', <Certificate />], ['Nachrichten', <Speech />]]} />
      <ToolGroup items={[['Kataloge', <OrangeBook />], ['Protokoll', <Notebook />]]} />
      <ToolGroup items={[['Fenster verschieben', <GrayPages />], ['Fenster schließen', <WindowMinus />]]} />
      <ToolGroup items={[['Information', <Info />], ['Hilfe', <Help />]]} />
      <div className="ml-[3px] flex items-center gap-[5px]">
        <label htmlFor="year" className="whitespace-nowrap">Gewähltes Schuljahr</label>
        <DropDown id="year" value="2015/16" width="w-[76px]" />
        <label htmlFor="day" className="whitespace-nowrap">Gewählter Tag</label>
        <span className="flex">
          <Field id="day" value="01.08.2015" width="w-[84px]" locked />
          <button type="button" aria-label="Tag wählen" disabled className="flex h-5 w-4 items-center justify-center rounded-[2px] border border-[#d6d6de]">
            <Chevron faint />
          </button>
        </span>
        <DropDown id="period" value="Schuljahr Beginn" width="w-[148px]" />
      </div>
      <span className="ml-auto h-5 w-px bg-[#b0b0b8]" />
      <span className="ml-1"><Check id="keep" checked /></span>
      <label htmlFor="keep" className="whitespace-nowrap">Klasse beibehalten</label>
      <span className="mr-1 h-5 w-px bg-[#b0b0b8]" />
    </div>
  );
}

function DocumentTabs() {
  return (
    <div className="flex h-[23px] shrink-0 items-end gap-0.5 pl-px">
      <button type="button" className="flex h-[23px] items-center gap-[3px] rounded-t-[2px] border border-b-0 border-[#8ba3c0] bg-[#f5f5fd] pr-1 pl-2">
        Start <CloseX />
      </button>
      <button type="button" className="flex h-[23px] items-center gap-1 rounded-t-[2px] border border-t-[3px] border-b-0 border-[#8ba3c0] border-t-[#2c6fe0] bg-[#fafaff] px-1 pb-1">
        <School /> Klassen / Klassengruppen <CloseX />
      </button>
    </div>
  );
}

function InnerToolbar() {
  return (
    <div className="flex h-[22px] shrink-0 items-center gap-1 pl-1">
      <ToolGroup items={[['Neu', <NewDoc />], ['Speichern', <Save />], ['Rückgängig', <Undo />], ['Löschen', <Delete />], ['Maske schließen', <FormMinus />]]} />
      <ToolGroup
        items={[
          ['Tabellenansicht', <TableView />],
          ['Erster Datensatz', <First />],
          ['Seite zurück', <FastBack />],
          ['Voriger Datensatz', <Back />],
          ['Nächster Datensatz', <Forward />],
          ['Seite vor', <FastForward />],
          ['Letzter Datensatz', <Last />],
          ['Neu laden', <Refresh />],
        ]}
      />
      <ToolGroup items={[['Zurück', <GrayBack />], ['Ausschneiden', <Scissors />], ['Kopieren', <Copy />], ['Einfügen', <Paste />]]} />
      <ToolGroup items={[['Drucken', <Print />], ['Vorschau', <Eye />], ['Hinweis', <Bulb />], ['Erinnerung', <Bell />], ['Wiedervorlage', <Clock />]]} />
      <ToolGroup items={[['Schüler zuordnen', <GrayPeople />], ['Schüler entfernen', <GrayPeople />], ['Einstellungen', <Filters />], ['Notiz', <GrayNote />]]} />
      <ToolGroup items={[['Hilfe zur Maske', <Help />]]} />
      <button type="button" aria-label="Exportieren" className="ml-auto"><Export /></button>
      <Divider />
      <button type="button" aria-label="Maske beenden" className="mx-[3px]"><CloseX thin /></button>
      <Divider />
    </div>
  );
}

function ClassHeader() {
  return (
    <div className="grid grid-cols-[85px_100px_100px_1fr] items-center gap-x-3 gap-y-1.5 pt-[5px] pr-1">
      <Label htmlFor="name">Klassenname</Label>
      <Field id="name" value="Neu" width="w-full" />
      <Label htmlFor="long">Langbezeichnung</Label>
      <Field id="long" value="Neue Erstklässler" width="w-full" />
      <Label htmlFor="grade">Jahrgangsstufe</Label>
      <Field id="grade" value="1" width="w-full" locked />
      <Label htmlFor="school">Schule</Label>
      <Field id="school" value="ST VS Seefeld GS SEEFELD" width="w-full" locked />
      <span className="col-span-2" />
      <Label htmlFor="total">Anzahl Schüler ges.</Label>
      <div className="flex h-[23px] items-center gap-3">
        <Field id="total" value="0/0" width="w-10" locked right />
        <Label htmlFor="male">davon männlich</Label>
        <Field id="male" value="0/0" width="w-10" locked right />
        <Label htmlFor="female">weiblich</Label>
        <Field id="female" value="0/0" width="w-10" locked right />
        <button type="button" className={`${buttonLook} ml-auto h-6 w-[150px]`}>
          <StudentPair /> Schüler anzeigen...
        </button>
      </div>
    </div>
  );
}

function FormTabs() {
  return (
    <div role="tablist" className="mt-1.5 flex items-end gap-px pl-0.5">
      <button role="tab" aria-selected="true" type="button" className="h-[22px] rounded-t-[2px] border border-t-[3px] border-b-0 border-[#8ba3c0] border-t-[#2c6fe0] bg-[#fcfcff] px-0.5 pb-0.5">Stammdaten</button>
      <button role="tab" type="button" className="h-[22px] rounded-t-[2px] border border-b-0 border-[#8ba3c0] bg-[#f8f8fe] px-[3px] pt-0.5">Besonderheiten</button>
      <button role="tab" type="button" className="h-[22px] rounded-t-[2px] border border-b-0 border-[#8ba3c0] bg-[#f8f8fe] px-[3px] pt-0.5">Klassengruppen</button>
      <button role="tab" type="button" disabled className="h-[22px] rounded-t-[2px] border border-b-0 border-[#d0d0da] px-0.5 pt-0.5 text-[#c0c0c8]">Zeugnisse</button>
    </div>
  );
}

const halves = 'grid grid-cols-2 pr-3';
const line = 'flex items-center gap-3';

function ClassForm() {
  return (
    <div className="flex flex-1 flex-col border border-[#8ba3c0] border-r-[#9aa5bb] border-b-[#9aa5bb] pt-1">
      <Group title="Eigenschaften der Klasse">
        <div className={`${halves} gap-y-1.5 pt-[3px] pb-2.5`}>
          <div className={line}>
            <Label htmlFor="kind" width="w-[167px]">Klassenart</Label>
            <Field id="kind" value="ORG" width="w-[60px]" />
            <InfoButton label="Klassenart wählen" />
            <i className="-ml-[7px] text-[10px]">Organisationsklasse</i>
          </div>
          <div className={line}>
            <Label htmlFor="orgform" width="w-[167px]">Organisationsform</Label>
            <Field id="orgform" width="w-[60px]" />
            <InfoButton label="Organisationsform wählen" />
          </div>
          <div className={line}>
            <Label htmlFor="special" width="w-[167px]">Besonderheit</Label>
            <Field id="special" width="w-[60px]" />
            <InfoButton label="Besonderheit wählen" />
          </div>
          <div className={line}>
            <Label htmlFor="focus" width="w-[167px]">Diff. Förderschwerpunkt</Label>
            <Field id="focus" width="w-[60px]" />
            <InfoButton label="Förderschwerpunkt wählen" />
          </div>
        </div>
      </Group>
      <Group title="Bezeichnung der Klasse für das kommende Schuljahr">
        <div className={`${line} pt-[3px] pb-2.5`}>
          <label htmlFor="target" className="w-[167px] pr-[3px] text-right leading-[15px]">Zielklasse für<br />Schuljahr 2016/17</label>
          <Field id="target" width="w-[88px]" />
          <i className="ml-[3px]">In diese Klasse werden bei der Neuanlage des Schuljahres 2016/17 die Schüler dieser Klasse pauschal hineinversetzt.</i>
        </div>
      </Group>
      <Group title="Klassenleitung">
        <div className={`${halves} pt-[3px] pb-2.5`}>
          <div className={line}>
            <Label htmlFor="lead" width="w-[167px]">Klassenleitung</Label>
            <Field id="lead" width="w-10" />
            <InfoButton label="Klassenleitung wählen" />
          </div>
          <div className={line}>
            <Label htmlFor="deputy" width="w-[167px]">Stellvertretung</Label>
            <Field id="deputy" width="w-10" />
            <InfoButton label="Stellvertretung wählen" />
          </div>
        </div>
      </Group>
      <Group title="Raum / Ort">
        <div className={`${halves} gap-y-3 pt-[3px]`}>
          <div className="flex h-6 items-start gap-3">
            <span className="flex h-6 items-end"><Label htmlFor="room" width="w-[167px]">Klassenraum</Label></span>
            <Field id="room" width="w-20" />
            <span className="pt-0.5"><InfoButton label="Klassenraum wählen" /></span>
          </div>
          <div className="flex h-6 items-center gap-1 pt-1 pl-[118px]">
            <Check id="outside" />
            <label htmlFor="outside">Außenklasse</label>
          </div>
          <div className="flex h-5 items-center gap-1 pl-[179px]">
            <Check id="moved" />
            <label htmlFor="moved">Ausgelagert</label>
          </div>
          <div className={line}>
            <Label htmlFor="place" width="w-[106px]">Ort der Auslagerung</Label>
            <Field id="place" width="min-w-0 flex-1" locked />
          </div>
        </div>
      </Group>
    </div>
  );
}

function StatusBar() {
  const cell = 'border-r-2 border-[#7b97b8] px-[3px] leading-[18px]';
  return (
    <footer className="flex h-5 shrink-0 border-y border-[#7b97b8] bg-[#d5535d] text-white">
      <span className={cell}>Otto, Marion</span>
      <span className={`${cell} flex-1`}>2901/Schulleitung,Betreuer ASV,Lehrkraft</span>
      <span className={cell}>Aktuelles Schuljahr: 2014/15</span>
      <span className="px-0.5 leading-[18px]">04.03.2015</span>
    </footer>
  );
}

const taskButton = 'flex h-[39px] w-[58px] items-center justify-center rounded-[3px]';
const openTask = 'border border-[#8fa3bb] bg-linear-to-br from-[#8593a8] via-[#2d4666] to-[#3b5779]';
const activeTask = 'border border-[#dfe7ee] bg-linear-to-br from-[#d7dde3] via-[#8c9cb0] to-[#c0ccd8]';

function Taskbar() {
  return (
    <div className="flex h-10 shrink-0 items-center gap-1 border-t border-[#50545c] bg-linear-to-b from-[#0b1420] via-[#173656] via-30% to-[#1d426e] font-['Open_Sans',sans-serif] text-white">
      <button type="button" aria-label="Start" className="flex w-14 justify-center pr-0.5"><StartOrb /></button>
      <button type="button" aria-label="Explorer" className={taskButton}><Explorer /></button>
      <button type="button" aria-label="Internet Explorer" className={taskButton}><InternetExplorer /></button>
      <button type="button" aria-label="Media Player" className={taskButton}><MediaPlayer /></button>
      <button type="button" aria-label="Firefox" className={`${taskButton} ${openTask}`}><Firefox /></button>
      <button type="button" aria-label="Snipping Tool" className={taskButton}><Snipping /></button>
      <button type="button" aria-label="ASV" className={`${taskButton} ${activeTask}`}><AsvLarge /></button>
      <button type="button" aria-label="PowerPoint" className={`${taskButton} ${openTask}`}><PowerPoint /></button>
      <div className="ml-auto flex items-center gap-2">
        <svg viewBox="0 0 8 4" className="mr-1 h-1 w-2" aria-hidden="true"><path d="M4 0l4 4H0z" fill="#fff" /></svg>
        <Svg><path d="M2 1.500v14" stroke="#fff" strokeWidth="1.500" /><path d="M3 2.500h5.500v1.500H15L13.500 8H8.500l-.5-1H3z" fill="#fff" /></Svg>
        <Svg><path d="M6 1h4v2h2.500v12h-9V3H6z" fill="none" stroke="#fff" strokeWidth="1.200" /><path d="M5.500 6.500h5V13h-5z" fill="#fff" /></Svg>
        <Svg><path d="M1.500 13v-2M4.500 13v-4M7.500 13V7M10.500 13V5" stroke="#fff" strokeWidth="2" /><path d="M13.500 13V3" stroke="#8896a8" strokeWidth="2" /></Svg>
        <Svg><path d="M1 5.500h3l4-4v13l-4-4H1z" fill="#fff" /><path d="M10 5.500q1.500 2.500 0 5M12.500 3.500q3 4.500 0 9" fill="none" stroke="#fff" strokeWidth="1.200" /></Svg>
      </div>
      <div className="ml-1.5 w-[72px] text-center text-[12px] leading-[17px]">
        <div>17:33</div>
        <div>04.03.2015</div>
      </div>
      <span className="h-[38px] w-3 border border-[#5b6a7c] bg-linear-to-b from-[#3f4a5a] to-[#14263c]" />
    </div>
  );
}

export default function App() {
  return (
    <div className="flex h-screen min-h-[640px] flex-col bg-[#f2f2fe] font-['Noto_Sans',sans-serif] text-[11px] leading-4 text-black">
      <Gradients />
      <TitleBar />
      <MenuBar />
      <MainToolbar />
      <main className="flex min-h-0 flex-1 flex-col border-l-2 border-[#8f8f98] pt-[5px] pr-1 pl-px">
        <DocumentTabs />
        <div className="mb-1 flex min-h-0 flex-1 flex-col border-t border-r border-b border-[#8ba3c0]">
          <InnerToolbar />
          <div className="flex min-h-0 flex-1 gap-2 pr-[7px]">
            <div className="flex min-w-0 flex-1 flex-col border-t border-l border-[#6b6b76] pb-[3px]">
              <ClassHeader />
              <FormTabs />
              <ClassForm />
            </div>
            <Navigator />
          </div>
        </div>
      </main>
      <StatusBar />
      <Taskbar />
    </div>
  );
}
